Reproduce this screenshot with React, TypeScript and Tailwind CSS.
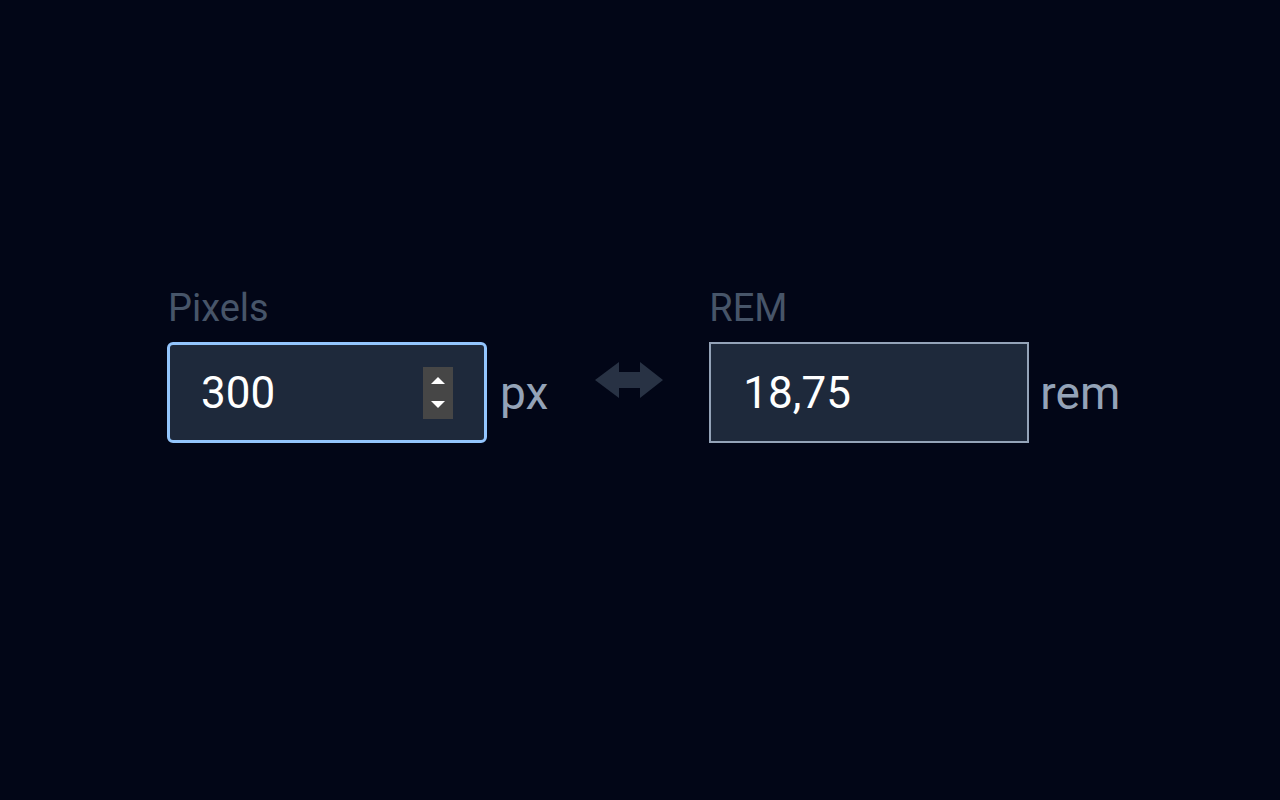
import React from "react";

const ArrowsH: React.FC = () => (
  <svg width="68" height="36" viewBox="0 0 68 36" className="block">
    <polygon
      points="0,18 24,0 24,10 45,10 45,0 68,18 45,36 45,26 24,26 24,36"
      fill="#283244"
    />
  </svg>
);

const Spinner: React.FC = () => (
  <div className="flex h-[52px] w-[30px] flex-col items-center justify-center gap-[17px] bg-[#464646]">
    <svg width="14" height="7" viewBox="0 0 14 7" className="block">
      <polygon points="7,0 14,7 0,7" fill="#ffffff" />
    </svg>
    <svg width="14" height="7" viewBox="0 0 14 7" className="block">
      <polygon points="0,0 14,0 7,7" fill="#ffffff" />
    </svg>
  </div>
);

export default function App() {
  return (
    <div
      className="min-h-screen bg-[#020617] pt-[289px] pl-[167px]"
      style={{ fontFamily: "Roboto, 'Liberation Sans', sans-serif" }}
    >
      <div className="flex items-start">
        {/* Pixels */}
        <div className="flex flex-col">
          <label className="pl-[1px] text-[38px] leading-none text-[#475569]">Pixels</label>
          <div className="mt-[15px] flex items-center">
            <div className="flex h-[101px] w-[320px] items-center justify-between rounded-[6px] border-[3px] border-[#93c5fd] bg-[#1e293b] pl-[31px] pr-[31px]">
              <span className="text-[44px] leading-none text-white">300</span>
              <Spinner />
            </div>
            <span className="ml-[13px] text-[46px] leading-none text-[#94a3b8]">px</span>
          </div>
        </div>

        {/* swap icon */}
        <div className="mt-[73px] ml-[47px] mr-[46px]">
          <ArrowsH />
        </div>

        {/* REM */}
        <div className="flex flex-col">
          <label className="text-[38px] leading-none text-[#475569]">REM</label>
          <div className="mt-[15px] flex items-center">
            <div className="flex h-[101px] w-[320px] items-center border-2 border-[#94a3b8] bg-[#1e293b] pl-[32px]">
              <span className="text-[44px] leading-none text-white">18,75</span>
            </div>
            <span className="ml-[11px] text-[46px] leading-none text-[#94a3b8]">rem</span>
          </div>
        </div>
      </div>
    </div>
  );
}
